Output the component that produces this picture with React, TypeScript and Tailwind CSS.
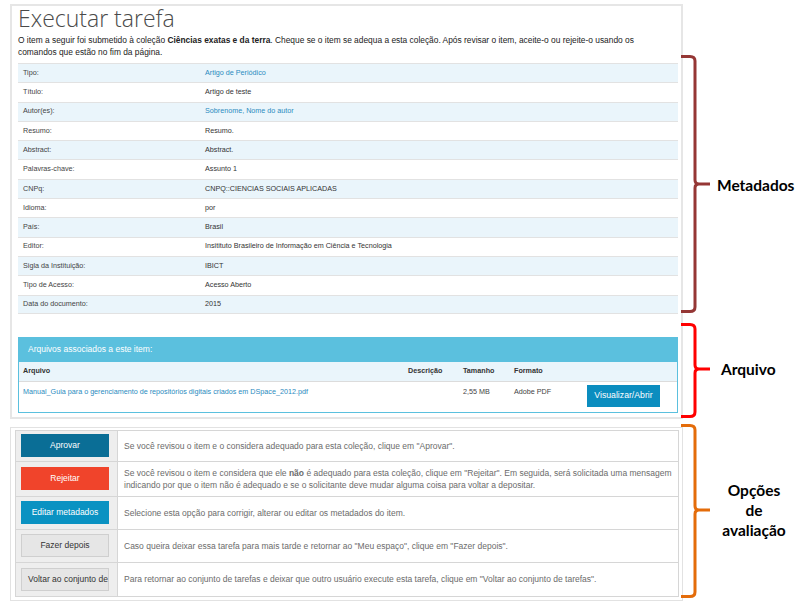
import React from "react";

const meta: [string, string, boolean][] = [
  ["Tipo:", "Artigo de Periódico", true],
  ["Título:", "Artigo de teste", false],
  ["Autor(es):", "Sobrenome, Nome do autor", true],
  ["Resumo:", "Resumo.", false],
  ["Abstract:", "Abstract.", false],
  ["Palavras-chave:", "Assunto 1", false],
  ["CNPq:", "CNPQ::CIENCIAS SOCIAIS APLICADAS", false],
  ["Idioma:", "por", false],
  ["País:", "Brasil", false],
  ["Editor:", "Insitituto Brasileiro de Informação em Ciência e Tecnologia", false],
  ["Sigla da Instituição:", "IBICT", false],
  ["Tipo de Acesso:", "Acesso Aberto", false],
  ["Data do documento:", "2015", false],
];

function Brace({ top, bottom, mid, color }: { top: number; bottom: number; mid: number; color: string }) {
  const d = `M681 ${top + 1.5} L690 ${top + 1.5} Q695 ${top + 1.5} 695 ${top + 6} L695 ${mid - 4} Q695 ${mid} 699 ${mid} L710 ${mid} M699 ${mid} Q695 ${mid} 695 ${mid + 4} L695 ${bottom - 6} Q695 ${bottom - 1.5} 690 ${bottom - 1.5} L681 ${bottom - 1.5}`;
  return <path d={d} fill="none" stroke={color} strokeWidth={3} strokeLinejoin="round" />;
}

export default function App() {
  return (
    <div className="relative w-[801px] h-[607px] bg-white overflow-hidden" style={{ fontFamily: '"Liberation Sans", Arial, sans-serif' }}>
      <div className="pl-[10px] pt-[4px]">
        {/* Panel 1 */}
        <div className="w-[673px] border-2 border-[#e6e6e6] pl-[6px] pr-[3px] pb-[4px]">
          <div className="text-[23px] leading-[27px] font-light text-[#4a4a4a] -mt-[1px]" style={{ fontFamily: '"Open Sans", sans-serif', fontWeight: 300 }}>
            Executar tarefa
          </div>
          <p className="w-[625px] text-[8.4px] leading-[12px] text-[#222] mt-[2px]">
            O item a seguir foi submetido à coleção <b>Ciências exatas e da terra</b>. Cheque se o item se adequa a esta coleção. Após revisar o item, aceite-o ou rejeite-o usando os comandos que estão no fim da página.
          </p>
          <div className="mt-[5px] w-[660px]">
            {meta.map(([k, v, link], i) => (
              <div
                key={k}
                className={`flex items-center h-[19.3px] border-t border-[#e2e2e2] text-[7.2px] ${i % 2 === 0 ? "bg-[#eaf5fb]" : "bg-white"} ${i === meta.length - 1 ? "border-b" : ""}`}
              >
                <div className="w-[187px] pl-[5px] text-[#444]">{k}</div>
                <div className={link ? "text-[#2a8bc0]" : "text-[#333]"}>{v}</div>
              </div>
            ))}
          </div>
          <div className="mt-[23px] w-[660px] border border-[#5bc0de]">
            <div className="h-[24px] bg-[#5bc0de] flex items-center pl-[9px] text-[8.5px] text-white">Arquivos associados a este item:</div>
            <div className="h-[20px] bg-[#eaf5fb] border-b border-[#dcdcdc] flex items-center text-[7.2px] font-bold text-[#333]">
              <div className="w-[389px] pl-[4px]">Arquivo</div>
              <div className="w-[55px]">Descrição</div>
              <div className="w-[51px]">Tamanho</div>
              <div>Formato</div>
            </div>
            <div className="h-[30px] flex items-start text-[7.2px]">
              <div className="w-[389px] pl-[4px] pt-[5px] text-[#2a8bc0]">Manual_Guia para o gerenciamento de repositórios digitais criados em DSpace_2012.pdf</div>
              <div className="w-[55px]"></div>
              <div className="w-[51px] pt-[5px] text-[#444]">2,55 MB</div>
              <div className="w-[73px] pt-[5px] text-[#444]">Adobe PDF</div>
              <div className="mt-[3px] w-[73px] h-[22px] bg-[#0b8dbf] text-white text-[8.7px] flex items-center justify-center">Visualizar/Abrir</div>
            </div>
          </div>
        </div>

        {/* Panel 2 */}
        <div className="mt-[8px] w-[673px] border border-[#e2e2e2] pl-[4px] pr-[3px] pt-[2px] pb-[3px]">
          <div className="border border-[#d6d6d6] text-[8.5px]">
            {[
              { h: "h-[30px]", btn: "Aprovar", cls: "bg-[#0a6e96] text-white border-[#0a6e96]", desc: <>Se você revisou o item e o considera adequado para esta coleção, clique em "Aprovar".</> },
              { h: "h-[35px]", btn: "Rejeitar", cls: "bg-[#f0442b] text-white border-[#f0442b]", desc: <>Se você revisou o item e considera que ele <b>não</b> é adequado para esta coleção, clique em "Rejeitar". Em seguida, será solicitada uma mensagem indicando por que o item não é adequado e se o solicitante deve mudar alguma coisa para voltar a depositar.</> },
              { h: "h-[33px]", btn: "Editar metadados", cls: "bg-[#0a92c2] text-white border-[#0a92c2]", desc: <>Selecione esta opção para corrigir, alterar ou editar os metadados do item.</> },
              { h: "h-[33px]", btn: "Fazer depois", cls: "bg-[#e6e6e6] text-[#333] border-[#cfcfcf]", desc: <>Caso queira deixar essa tarefa para mais tarde e retornar ao "Meu espaço", clique em "Fazer depois".</> },
              { h: "h-[34px]", btn: "Voltar ao conjunto de tarefas", cls: "bg-[#e6e6e6] text-[#333] border-[#cfcfcf] justify-start pl-[6px]", desc: <>Para retornar ao conjunto de tarefas e deixar que outro usuário execute esta tarefa, clique em "Voltar ao conjunto de tarefas".</> },
            ].map((r, i) => (
              <div key={i} className={`flex ${r.h} ${i > 0 ? "border-t border-[#d6d6d6]" : ""}`}>
                <div className="w-[102px] shrink-0 bg-[#eeeeee] border-r border-[#d6d6d6] flex items-center pl-[5px]">
                  <div className={`w-[88px] h-[23px] border flex items-center justify-center overflow-hidden whitespace-nowrap ${r.cls}`}>{r.btn}</div>
                </div>
                <div className="flex-1 flex items-center pl-[6px] pr-[4px] leading-[12px] text-[#6b6b6b]">
                  <div>{r.desc}</div>
                </div>
              </div>
            ))}
          </div>
        </div>
      </div>

      {/* Annotations */}
      <svg className="absolute left-0 top-0 pointer-events-none" width={801} height={607}>
        <Brace top={55} bottom={313} mid={184} color="#953735" />
        <Brace top={323} bottom={418} mid={369} color="#ff0000" />
        <Brace top={424} bottom={598} mid={510} color="#e46c0a" />
      </svg>
      <div className="absolute left-[717px] top-[175px] text-[15.5px] font-bold text-black leading-[20px]" style={{ fontFamily: "Lato, sans-serif" }}>Metadados</div>
      <div className="absolute left-[721px] top-[359px] text-[15.5px] font-bold text-black leading-[20px]" style={{ fontFamily: "Lato, sans-serif" }}>Arquivo</div>
      <div className="absolute left-[712px] top-[480px] w-[84px] text-center text-[15.5px] font-bold text-black leading-[20px]" style={{ fontFamily: "Lato, sans-serif" }}>
        Opções<br />de<br />avaliação
      </div>
    </div>
  );
}
